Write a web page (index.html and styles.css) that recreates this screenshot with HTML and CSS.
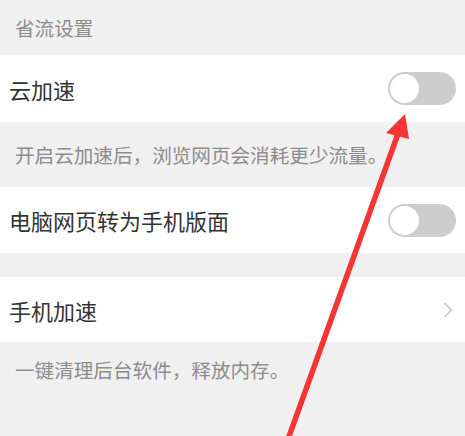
FILE: index.html
```html
<!DOCTYPE html>
<html lang="zh-CN">
<head>
<meta charset="utf-8">
<title>省流设置</title>
<link rel="stylesheet" href="styles.css">
</head>
<body>
<div class="page">
  <div class="section-title">省流设置</div>
  <div class="row row-first">
    <span class="label">云加速</span>
    <span class="switch"><span class="knob"></span></span>
  </div>
  <div class="note">开启云加速后，浏览网页会消耗更少流量。</div>
  <div class="row">
    <span class="label">电脑网页转为手机版面</span>
    <span class="switch"><span class="knob"></span></span>
  </div>
  <div class="spacer"></div>
  <div class="row row-link">
    <span class="label">手机加速</span>
    <svg class="chevron" width="10" height="16" viewBox="0 0 10 16"><polyline points="2,1.5 8.5,8 2,14.5" fill="none" stroke="#c9c9c9" stroke-width="1.6" stroke-linecap="round" stroke-linejoin="round"/></svg>
  </div>
  <div class="note note-last">一键清理后台软件，释放内存。</div>

  <svg class="arrow" width="465" height="436" viewBox="0 0 465 436">
    <line x1="287" y1="442" x2="399" y2="131" stroke="#f53434" stroke-width="5.5" stroke-linecap="butt"/>
    <polygon points="405,114 386,133 409,139" fill="#f53434"/>
  </svg>
</div>
</body>
</html>
```

FILE: styles.css
```css
html, body {
  margin: 0;
  padding: 0;
}
body {
  background: #f0f0f0;
  font-family: "Noto Sans CJK SC", "Noto Sans", sans-serif;
}
.page {
  position: relative;
  width: 465px;
  height: 436px;
  overflow: hidden;
  background: #f0f0f0;
}
.section-title {
  height: 55px;
  box-sizing: border-box;
  padding: 0 0 0 15px;
  display: flex;
  align-items: center;
  font-size: 19.6px;
  color: #8c8c8c;
}
.row {
  height: 66px;
  box-sizing: border-box;
  padding: 0 9px 0 9px;
  background: #ffffff;
  display: flex;
  align-items: center;
  justify-content: space-between;
}
.row-first {
  height: 67px;
}
.row-link {
  height: 65px;
  padding-right: 12px;
}
.label {
  font-size: 22px;
  color: #333333;
  line-height: 1;
}
.note {
  height: 65px;
  box-sizing: border-box;
  padding-left: 15px;
  display: flex;
  align-items: center;
  font-size: 19.6px;
  color: #8c8c8c;
}
.note-last {
  height: 55px;
}
.spacer {
  height: 24px;
}
.switch {
  width: 68px;
  height: 33px;
  border-radius: 17px;
  background: #cdcdcd;
  box-sizing: border-box;
  padding: 2px;
  display: flex;
  align-items: center;
}
.knob {
  width: 29px;
  height: 29px;
  border-radius: 50%;
  background: #ffffff;
}
.chevron {
  display: block;
}
.arrow {
  position: absolute;
  left: 0;
  top: 0;
  pointer-events: none;
}
```
